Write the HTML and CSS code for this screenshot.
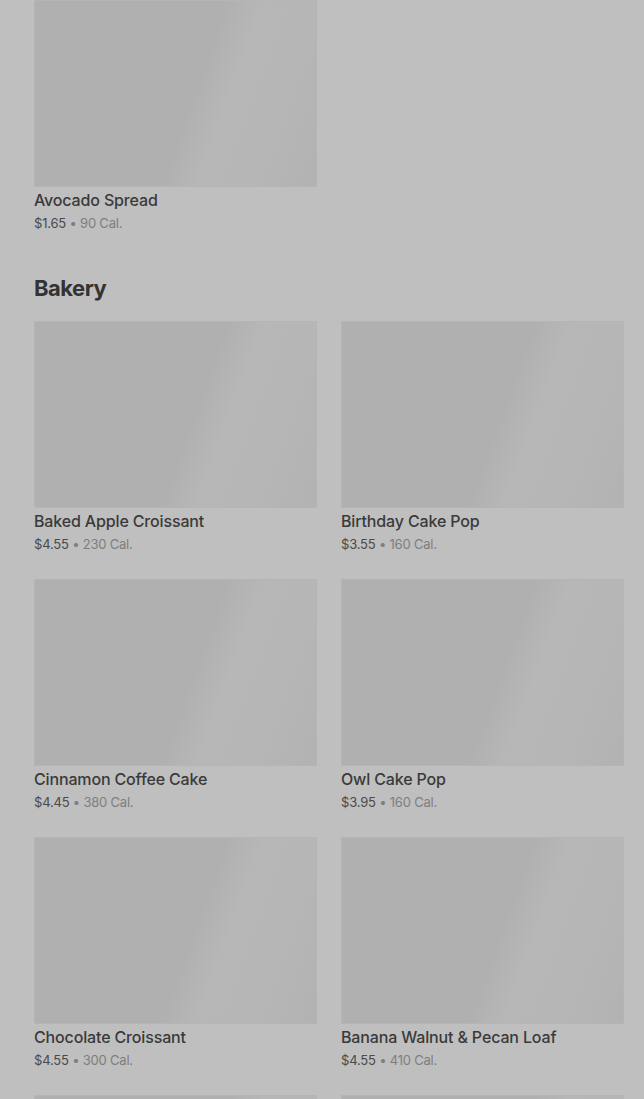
FILE: index.html
```html
<!DOCTYPE html>
<html>
<head>
<meta charset="utf-8">
<link rel="stylesheet" href="styles.css">
</head>
<body>
<main class="menu">
  <section class="section">
    <div class="grid">
      <div class="card">
        <div class="thumb"></div>
        <div class="name">Avocado Spread</div>
        <div class="meta"><span class="price">$1.65</span> • <span class="cal">90 Cal.</span></div>
      </div>
    </div>
  </section>
  <section class="section">
    <h2 class="heading">Bakery</h2>
    <div class="grid">
      <div class="card">
        <div class="thumb"></div>
        <div class="name">Baked Apple Croissant</div>
        <div class="meta"><span class="price">$4.55</span> • <span class="cal">230 Cal.</span></div>
      </div>
      <div class="card">
        <div class="thumb"></div>
        <div class="name">Birthday Cake Pop</div>
        <div class="meta"><span class="price">$3.55</span> • <span class="cal">160 Cal.</span></div>
      </div>
      <div class="card">
        <div class="thumb"></div>
        <div class="name">Cinnamon Coffee Cake</div>
        <div class="meta"><span class="price">$4.45</span> • <span class="cal">380 Cal.</span></div>
      </div>
      <div class="card">
        <div class="thumb"></div>
        <div class="name">Owl Cake Pop</div>
        <div class="meta"><span class="price">$3.95</span> • <span class="cal">160 Cal.</span></div>
      </div>
      <div class="card">
        <div class="thumb"></div>
        <div class="name">Chocolate Croissant</div>
        <div class="meta"><span class="price">$4.55</span> • <span class="cal">300 Cal.</span></div>
      </div>
      <div class="card">
        <div class="thumb"></div>
        <div class="name">Banana Walnut &amp; Pecan Loaf</div>
        <div class="meta"><span class="price">$4.55</span> • <span class="cal">410 Cal.</span></div>
      </div>
      <div class="card">
        <div class="thumb"></div>
      </div>
      <div class="card">
        <div class="thumb"></div>
      </div>
    </div>
  </section>
</main>
</body>
</html>
```

FILE: styles.css
```css
html, body {
  margin: 0;
  padding: 0;
  background: #bfbfbf;
}
body {
  font-family: Inter, "Noto Sans", "Liberation Sans", sans-serif;
  overflow: hidden;
  height: 1099px;
}
.menu {
  padding: 0 20px 0 34px;
  display: flex;
  flex-direction: column;
  gap: 42px;
}
.heading {
  margin: 0 0 19px 0;
  font-size: 22px;
  line-height: 28px;
  font-weight: 700;
  letter-spacing: -0.5px;
  color: #333333;
}
.grid {
  display: grid;
  grid-template-columns: 283px 283px;
  column-gap: 24px;
  row-gap: 26px;
}
.card {
  display: flex;
  flex-direction: column;
}
.thumb {
  height: 187px;
  box-sizing: border-box;
  border: 1px solid #b5b5b5;
  background: linear-gradient(110deg, #b0b0b0 0%, #b0b0b0 55%, #b7b7b7 66%, #b6b6b6 82%, #b2b2b2 100%);
}
.name {
  margin-top: 3px;
  font-size: 16px;
  line-height: 20px;
  font-weight: 500;
  color: #3a3a3a;
  letter-spacing: -0.15px;
}
.meta {
  margin-top: 4px;
  font-size: 13px;
  line-height: 18px;
  color: #7e7e7e;
  letter-spacing: -0.2px;
}
.price {
  color: #4a4a4a;
}
.cal {
  color: #7e7e7e;
}
```
